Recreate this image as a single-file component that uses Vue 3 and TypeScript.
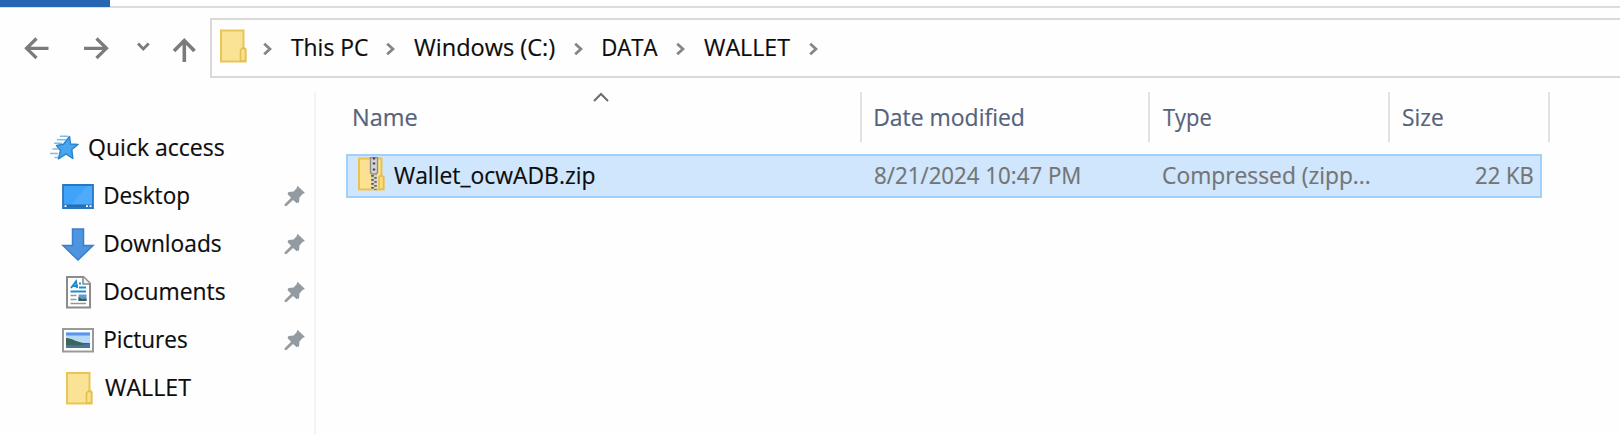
<script setup lang="ts">
interface Crumb { text: string; width: number; gap: number; after: number }
interface Place { text: string; width: number; icon: string; pinned: boolean }
interface Column { key: string; text: string; width: number; value: string; valueWidth: number }

const crumbs: Crumb[] = [
  { text: 'This PC', width: 77, gap: 19, after: 18 },
  { text: 'Windows (C:)', width: 141, gap: 19, after: 19 },
  { text: 'DATA', width: 55, gap: 20, after: 18 },
  { text: 'WALLET', width: 86.5, gap: 19, after: 18 },
]

const places: Place[] = [
  { text: 'Desktop', width: 84, icon: 'desktop', pinned: true },
  { text: 'Downloads', width: 116, icon: 'downloads', pinned: true },
  { text: 'Documents', width: 120, icon: 'documents', pinned: true },
  { text: 'Pictures', width: 82, icon: 'pictures', pinned: true },
  { text: 'WALLET', width: 86.5, icon: 'folder', pinned: false },
]

const columns: Column[] = [
  { key: 'name', text: 'Name', width: 63, value: 'Wallet_ocwADB.zip', valueWidth: 200.5 },
  { key: 'date', text: 'Date modified', width: 148, value: '8/21/2024 10:47 PM', valueWidth: 204.5 },
  { key: 'type', text: 'Type', width: 48, value: 'Compressed (zipp...', valueWidth: 206.5 },
  { key: 'size', text: 'Size', width: 40, value: '22 KB', valueWidth: 57 },
]

const ctx = document.createElement('canvas').getContext('2d')!
ctx.font = '24.5px "Open Sans"'

// Condenses a label horizontally so its ink spans the given width.
function fit(text: string, width: number) {
  const m = ctx.measureText(text)
  const scale = width / (m.actualBoundingBoxLeft + m.actualBoundingBoxRight)
  return { transform: `translateX(${m.actualBoundingBoxLeft * scale}px) scaleX(${scale})` }
}
</script>

<template>
  <div class="explorer">
    <div class="ribbon"><div class="file-tab"></div></div>
    <div class="toolbar">
      <svg class="nav" width="210" height="60" viewBox="0 18 210 60">
        <g fill="none" stroke="#7b7b7b" stroke-width="3.200">
          <path d="M48.500 48.300H26.500M36.500 38.500L26.500 48.300L36.500 58" />
          <path d="M84 48.300H106.500M96.500 38.500L106.500 48.300L96.500 58" />
          <path d="M138 43.500L143.300 49L148.700 43.500" stroke-width="2.800" />
          <path d="M184.300 62V40M174 51L184.300 40.500L194.500 51" stroke-width="3.600" />
        </g>
      </svg>
      <div class="address">
        <svg class="address-folder" width="28" height="34" viewBox="0 0 28 34">
          <path d="M1 1.500H23.500V18.500L25.500 20V32.500H1Z" fill="#fbe396" stroke="#e9c557" stroke-width="2" />
          <path d="M20.500 32V21L22.500 19L25.500 20.500V32Z" fill="#fbe08b" stroke="#e4be50" stroke-width="1.600" />
        </svg>
        <svg class="chev first" width="9" height="14" viewBox="0 0 9 14"><path d="M1.200 1.700L7 7L1.200 12.300" /></svg>
        <template v-for="c in crumbs" :key="c.text">
          <span class="label" :style="{ width: c.width + 'px', marginLeft: c.gap + 'px', marginRight: c.after + 'px' }"><span :style="fit(c.text, c.width)">{{ c.text }}</span></span>
          <svg class="chev" width="9" height="14" viewBox="0 0 9 14"><path d="M1.200 1.700L7 7L1.200 12.300" /></svg>
        </template>
      </div>
    </div>

    <div class="body">
      <nav class="sidebar">
        <div class="place quick">
          <svg width="32" height="26" viewBox="0 0 32 26">
            <path d="M21.500 1.500L22.500 9L30 9.500L23.800 14.500L24.800 23.500L18 18.800L10.500 23.800L12.500 15.500L8.500 10.500L15.500 9.200Z" fill="#48a6ee" stroke="#2e83cb" stroke-width="1.500" stroke-linejoin="round" />
            <path d="M12 1.300H20M9 4.800H18M6 8.200H14M4.500 14H11M2 18.500H10M6.500 22.500H10" stroke="#7cbdec" stroke-width="1.400" />
          </svg>
          <span class="label"><span :style="fit('Quick access', 135)">Quick access</span></span>
        </div>
        <div v-for="p in places" :key="p.text" class="place">
          <svg class="place-icon" width="34" height="34" viewBox="0 0 34 34">
            <g v-if="p.icon === 'desktop'">
              <path d="M2 6H32V29H2Z" fill="#3fa3fa" />
              <path d="M10 26L26 7H31V26Z" fill="#50aafb" />
              <path d="M2 25.500H32V29H2Z" fill="#246fb3" />
              <path d="M2 6H32V29H2Z" fill="none" stroke="#2878bf" stroke-width="1.800" />
              <path d="M3.500 27.200H5.500M25 27.200H27M28.500 27.200H30.500" stroke="#fff" stroke-width="1.800" />
            </g>
            <path v-else-if="p.icon === 'downloads'" d="M11.500 2H22.500V18.500H32L17 33L2 18.500H11.500Z" fill="#4d95e0" stroke="#3d7dc7" stroke-width="1.500" />
            <g v-else-if="p.icon === 'documents'">
              <path d="M6 2H22.500L29 8.500V32.500H6Z" fill="#fff" stroke="#8b8b8b" stroke-width="2" />
              <path d="M22 2V9H29" fill="#f2f2f2" stroke="#8b8b8b" stroke-width="1.600" />
              <path d="M10 13L15 6.500L16 13M12 11H17M18 8.500H20M18 12.500H25M9.500 16.500H25" fill="none" stroke="#218ccd" stroke-width="2" />
              <path d="M9.500 20.500H15.500M9.500 24.500H15.500M9.500 28.500H25" stroke="#969696" stroke-width="1.500" />
              <path d="M17.500 19.500H25.500V26H17.500Z" fill="#6799ce" />
              <path d="M17.500 22L21 24L25.500 23.500V26H17.500Z" fill="#365f58" />
            </g>
            <g v-else-if="p.icon === 'pictures'">
              <path d="M2 6H32V28.500H2Z" fill="#fff" stroke="#9a9a9a" stroke-width="2" />
              <path d="M5 9.500H29V25H5Z" fill="#b4d9fb" />
              <path d="M5 9.500H29V12.500H5Z" fill="#5995ea" />
              <path d="M5 15C11 15 15 19 23 20H29V25H5Z" fill="#3d6458" />
              <path d="M5 22L16 22.500L29 20.500V25H5Z" fill="#46779b" />
            </g>
            <g v-else>
              <path d="M6 2H28.500V19L30.500 21V32.500H6Z" fill="#fbe396" stroke="#e9c557" stroke-width="2" />
              <path d="M25.500 32V22L27.500 20L30.500 21.500V32Z" fill="#fbe08b" stroke="#e4be50" stroke-width="1.600" />
            </g>
          </svg>
          <span class="label"><span :style="fit(p.text, p.width)">{{ p.text }}</span></span>
          <svg v-if="p.pinned" class="pin" width="22" height="22" viewBox="0 0 22 22">
            <path d="M13.500 .8L21 8L18.500 9L15.500 12.500L15 17.500L12.500 18L9 15L2.500 21H.5V19.500L7 12.800L3.500 9L4.500 7L9.500 6.500L12.500 3.500Z" fill="#929ba1" />
          </svg>
        </div>
      </nav>

      <main class="files">
        <div class="grid header">
          <div v-for="c in columns" :key="c.key" class="cell">
            <svg v-if="c.key === 'name'" class="sort" width="18" height="11" viewBox="0 0 18 11"><path d="M2 9L9 2L16 9" fill="none" stroke="#6c6c6c" stroke-width="2" /></svg>
            <span class="label"><span :style="fit(c.text, c.width)">{{ c.text }}</span></span>
          </div>
        </div>
        <div class="grid row">
          <div v-for="c in columns" :key="c.key" class="cell" :class="c.key">
            <svg v-if="c.key === 'name'" class="zip" width="28" height="34" viewBox="0 0 28 34">
              <path d="M1 1.500H23.500V18.500L25.500 20V32.500H1Z" fill="#fbe191" stroke="#e9c350" stroke-width="2" />
              <path d="M21 32V20L23 18.500L25.500 20V32Z" fill="#fbdc7c" stroke="#e4be50" stroke-width="1.600" />
              <path d="M12.500 .5H19.500V15.500L18.500 17H13.500L12.500 15.500Z" fill="#d4d4d4" stroke="#8e8e8e" stroke-width="1.400" />
              <path d="M14.800 1.500H17.200M14.800 6.500H17.200M14.800 12.500H17.200" stroke="#444" stroke-width="2" />
              <path d="M13 18H19V33H13Z" fill="#d8d4c6" />
              <path d="M14.500 18V33" stroke="#555" stroke-width="2.500" stroke-dasharray="1.800 2.200" />
              <path d="M17.500 20V33" stroke="#666" stroke-width="2.500" stroke-dasharray="1.800 2.200" />
            </svg>
            <span class="label" :style="{ width: c.valueWidth + 'px' }"><span :style="fit(c.value, c.valueWidth)">{{ c.value }}</span></span>
          </div>
        </div>
      </main>
    </div>
  </div>
</template>

<style>
body { margin: 0; background: #fff; }
</style>

<style scoped>
.explorer {
  width: 1620px;
  height: 434px;
  overflow: hidden;
  display: flex;
  flex-direction: column;
  background: #fefefe;
  color: #0c0c0c;
  font: 24.5px/34px "Open Sans", "Noto Sans", sans-serif;
  -webkit-text-stroke: 0.2px currentColor;
}
svg { display: block; flex: none; }
.ribbon { height: 8px; box-sizing: border-box; border-bottom: 2px solid #dcdcdc; flex: none; }
.file-tab { width: 110px; height: 6.500px; background: #2665b1; }
.toolbar { display: flex; height: 60px; margin-top: 10px; flex: none; }
.address {
  display: flex;
  align-items: center;
  box-sizing: border-box;
  width: 1412px;
  height: 60px;
  border: 2px solid #d9d9d9;
  border-right: 0;
}
.address-folder { margin: -4px 0 0 8px; }
.chev path { fill: none; stroke: #858585; stroke-width: 2.800; }
.chev { margin-top: 2px; }
.chev.first { margin-left: 15px; }
.label { display: block; flex: none; white-space: nowrap; margin-top: -3px; }
.label > span { display: inline-block; transform-origin: 0 50%; }
.body { display: flex; flex: 1; }
.sidebar {
  width: 314px;
  box-sizing: content-box;
  margin-top: 14px;
  padding-top: 32px;
  border-right: 2px solid #f4f4f4;
}
.place { display: flex; align-items: center; height: 48px; padding-left: 61px; }
.quick { padding-left: 48px; }
.quick .label { margin-left: 8.500px; }
.place-icon { margin-right: 9.500px; }
.pin { margin: 0 8px 0 auto; }
.files { margin: 14px 0 0 30px; width: 1204px; }
.grid { display: grid; }
.header { grid-template-columns: 516px 288px 240px 160px; height: 50px; color: #56627b; }
.header .cell {
  position: relative;
  display: flex;
  align-items: center;
  padding-left: 13px;
  border-right: 2px solid #e2e2e2;
}
.header .cell:first-child { padding-left: 7.500px; }
.header .label { margin-top: -1px; }
.sort { position: absolute; left: 246px; top: 0; }
.row {
  grid-template-columns: 514px 288px 240px 150px;
  width: 1192px;
  height: 40px;
  margin-top: 12px;
  border: 2px solid #a0d0fc;
  background: #d0e6fd;
  color: #747474;
}
.row .cell { display: flex; align-items: center; padding-left: 12.500px; }
.row .name { padding-left: 10px; color: #0c0c0c; }
.zip { margin: -4px 8px 0 0; }
.row .size { justify-content: flex-end; padding: 0 7px 0 0; }
</style>
